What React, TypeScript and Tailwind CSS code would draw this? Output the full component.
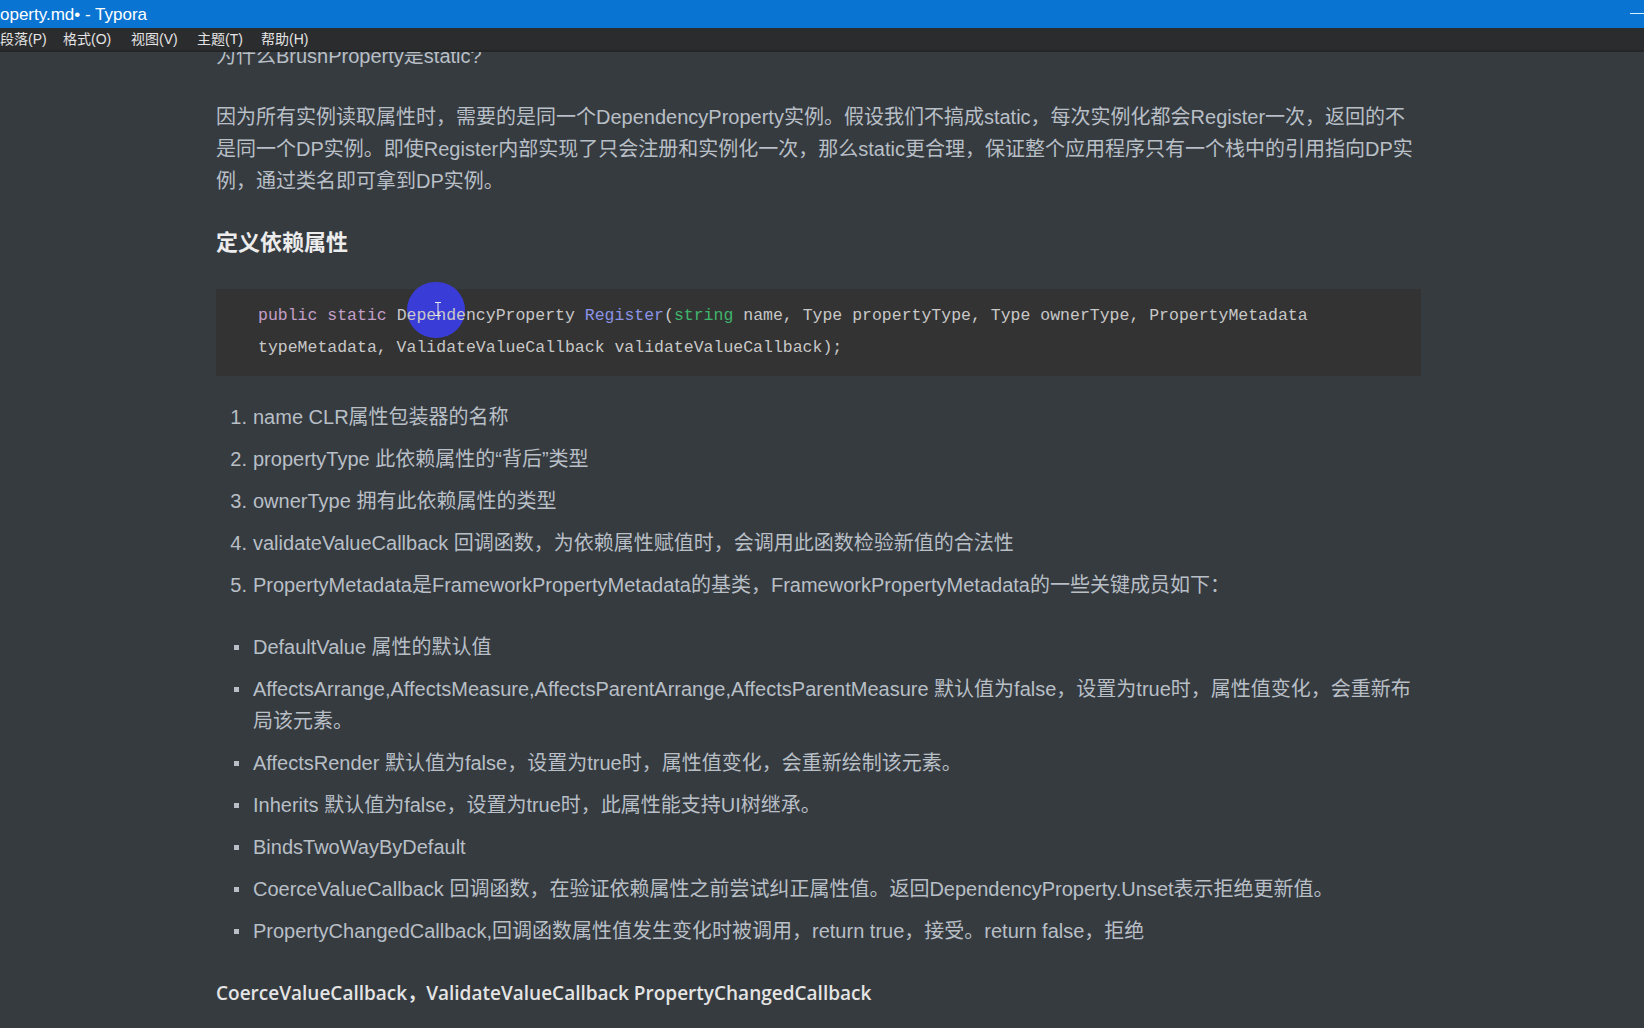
import React from "react";

const body = "font-['Liberation_Sans','Noto_Sans_CJK_SC',sans-serif]";

function Bullet({ children, lines }: { children?: React.ReactNode; lines?: string[] }) {
  return (
    <li className="flex">
      <span className="w-[37px] shrink-0 flex items-start pt-[14px] pl-[18px]">
        <span className="block w-[5px] h-[5px] bg-[#b8bfc6]" />
      </span>
      <span className="whitespace-nowrap">
        {lines ? lines.map((l, i) => <div key={i}>{l}</div>) : children}
      </span>
    </li>
  );
}

function Num({ n, children }: { n: number; children: React.ReactNode }) {
  return (
    <li className="flex">
      <span className="w-[37px] shrink-0 text-right pr-[6px]">{n}.</span>
      <span className="whitespace-nowrap">{children}</span>
    </li>
  );
}

export default function App() {
  return (
    <div className={`w-[1644px] h-[1028px] flex flex-col overflow-hidden bg-[#363b40] ${body}`}>
      {/* title bar */}
      <div className="h-[28px] shrink-0 bg-[#0a74d2] flex items-center">
        <span className="text-white text-[17px] leading-none font-['Liberation_Sans',sans-serif]">
          operty.md• - Typora
        </span>
        <span className="ml-auto mr-[-2px] w-[16px] h-[1px] bg-[#d8f0ff] -mt-[2px]" />
      </div>
      {/* menu bar */}
      <div className="h-[22px] shrink-0 bg-[#2b2c2e] flex items-center text-[14px] text-[#e4e4e4] font-['Liberation_Sans','Noto_Sans_CJK_SC',sans-serif]">
        <span className="w-[63px]">段落(P)</span>
        <span className="w-[68px]">格式(O)</span>
        <span className="w-[66px]">视图(V)</span>
        <span className="w-[64px]">主题(T)</span>
        <span>帮助(H)</span>
      </div>
      <div className="h-[2px] shrink-0 bg-[#242527]" />
      {/* content */}
      <main className="flex-1 overflow-hidden">
        <div className="ml-[216px] w-[1205px] -mt-[12px] text-[20px] leading-[32px] text-[#b8bfc6]">
          <p className="whitespace-nowrap">为什么BrushProperty是static?</p>
          <p className="mt-[29px] whitespace-nowrap">
            <span className="block">因为所有实例读取属性时，需要的是同一个DependencyProperty实例。假设我们不搞成static，每次实例化都会Register一次，返回的不</span>
            <span className="block">是同一个DP实例。即使Register内部实现了只会注册和实例化一次，那么static更合理，保证整个应用程序只有一个栈中的引用指向DP实</span>
            <span className="block">例，通过类名即可拿到DP实例。</span>
          </p>
          <h3 className="mt-[30px] text-[22px] leading-[32px] font-bold text-[#ececec]">定义依赖属性</h3>
          <div className="mt-[30px] bg-[#333333] pl-[42px] pt-[11px] pb-[12px] relative font-['Liberation_Mono',monospace] text-[16.5px] leading-[32px] text-[#c8c8c8] whitespace-pre">
            <div className="absolute left-[191px] top-[-7px] w-[58px] h-[56px] rounded-full bg-[#3a3cd8]" />
            <div className="relative">
              <span className="text-[#c49fc9]">public static</span> DependencyProperty <span className="text-[#8a93e6]">Register</span>(<span className="text-[#3fb56c]">string</span> name, Type propertyType, Type ownerType, PropertyMetadata
            </div>
            <div className="relative">typeMetadata, ValidateValueCallback validateValueCallback);</div>
            <svg className="absolute left-[218px] top-[13px]" width="8" height="14" viewBox="0 0 8 14">
              <path d="M1 0.5h6M4 0.5v13M1 13.5h6" stroke="#e8e8f0" strokeWidth="1" fill="none" />
            </svg>
          </div>
          <ol className="mt-[25px] flex flex-col gap-[10px]">
            <Num n={1}>name CLR属性包装器的名称</Num>
            <Num n={2}>propertyType 此依赖属性的“背后”类型</Num>
            <Num n={3}>ownerType 拥有此依赖属性的类型</Num>
            <Num n={4}>validateValueCallback 回调函数，为依赖属性赋值时，会调用此函数检验新值的合法性</Num>
            <Num n={5}>PropertyMetadata是FrameworkPropertyMetadata的基类，FrameworkPropertyMetadata的一些关键成员如下：</Num>
          </ol>
          <ul className="mt-[30px] flex flex-col gap-[10px]">
            <Bullet>DefaultValue 属性的默认值</Bullet>
            <Bullet
              lines={[
                "AffectsArrange,AffectsMeasure,AffectsParentArrange,AffectsParentMeasure 默认值为false，设置为true时，属性值变化，会重新布",
                "局该元素。",
              ]}
            />
            <Bullet>AffectsRender 默认值为false，设置为true时，属性值变化，会重新绘制该元素。</Bullet>
            <Bullet>Inherits 默认值为false，设置为true时，此属性能支持UI树继承。</Bullet>
            <Bullet>BindsTwoWayByDefault</Bullet>
            <Bullet>CoerceValueCallback 回调函数，在验证依赖属性之前尝试纠正属性值。返回DependencyProperty.Unset表示拒绝更新值。</Bullet>
            <Bullet>PropertyChangedCallback,回调函数属性值发生变化时被调用，return true，接受。return false，拒绝</Bullet>
          </ul>
          <p className="mt-[30px] whitespace-nowrap font-['Open_Sans','Noto_Sans_CJK_SC',sans-serif] font-semibold text-[19px] text-[#e4e4e4]">
            CoerceValueCallback，ValidateValueCallback PropertyChangedCallback
          </p>
        </div>
      </main>
    </div>
  );
}
